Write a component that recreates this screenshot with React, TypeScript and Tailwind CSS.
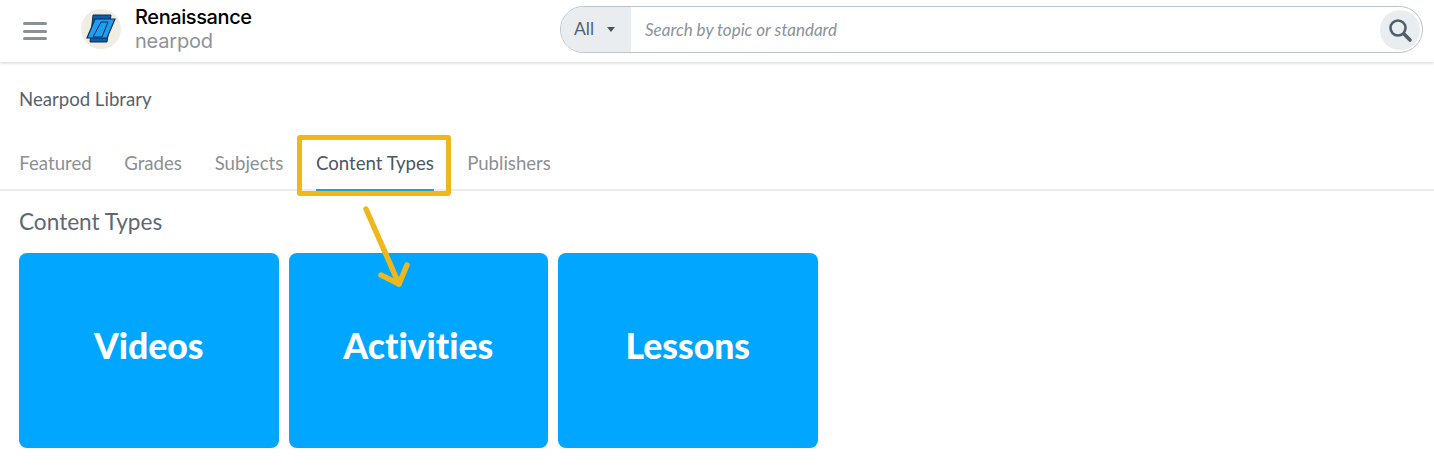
const font = "font-['Lato','Noto_Sans',sans-serif]"

const tabs = [
  { label: "Featured", width: "w-[73px]" },
  { label: "Grades", width: "w-[58px]" },
  { label: "Subjects", width: "w-[70px]" },
  { label: "Content Types", width: "w-[118px]", active: true },
  { label: "Publishers", width: "w-[86px]" },
]

const cards = ["Videos", "Activities", "Lessons"]

const Logo = () => (
  <div className="flex h-10 w-10 items-center justify-center rounded-full bg-[#f0eee4]">
    <svg width="40" height="40" viewBox="0 0 40 40" fill="none">
      <path d="M12 6H30L26 33H9Z" fill="#0a5fa8" stroke="#0b2f52" strokeWidth="1" />
      <path d="M14 10H34L26 29H6Z" fill="#1f9df0" stroke="#0b2f52" strokeWidth="1.2" />
      <path d="M20 13H27L21 28H12Z" stroke="#0b2f52" strokeWidth="1" />
    </svg>
  </div>
)

const App = () => {
  return (
    <div className={`relative h-[468px] w-[1434px] overflow-hidden bg-white ${font}`}>
      <header className="flex h-[62px] items-center shadow-[0_1px_3px_rgba(0,0,0,0.18)]">
        <div className="ml-[23px] flex w-6 flex-col gap-[4.5px]">
          <span className="h-[3px] rounded-sm bg-[#8a9095]" />
          <span className="h-[3px] rounded-sm bg-[#8a9095]" />
          <span className="h-[3px] rounded-sm bg-[#8a9095]" />
        </div>
        <div className="mb-1 ml-[34px] flex w-[172px] items-center gap-[14px]">
          <Logo />
          <div className="flex flex-col">
            <span className="font-['Inter',sans-serif] text-[20px] leading-[24px] font-medium tracking-[-0.4px] text-black">
              Renaissance
            </span>
            <span className="font-['Inter',sans-serif] text-[20px] leading-[24px] tracking-[-0.2px] text-[#8e9296]">
              nearpod
            </span>
          </div>
        </div>
        <div className="mb-[3px] ml-[307px] flex h-[47px] w-[863px] items-center overflow-hidden rounded-full border border-[#bcc2c6]">
          <div className="flex h-full w-[70px] items-center bg-[#e9edf0] pl-[13px] text-[#556270]">
            <span className="text-[17.5px]">All</span>
            <svg className="ml-[13px]" width="8" height="5" viewBox="0 0 8 5">
              <path d="M0 0H8L4 5Z" fill="#4a5560" />
            </svg>
          </div>
          <span className="ml-[14px] flex-1 text-[17px] text-[#8b9299] italic">
            Search by topic or standard
          </span>
          <div className="mr-[2px] flex h-10 w-10 items-center justify-center rounded-full bg-[#e9edf0]">
            <svg width="26" height="26" viewBox="0 0 26 26" fill="none" stroke="#4e5f6c">
              <circle cx="11" cy="11" r="7.5" strokeWidth="2.6" />
              <path d="M17 17L23 23" strokeWidth="3.6" strokeLinecap="round" />
            </svg>
          </div>
        </div>
      </header>

      <div className="px-[19px] pt-[26px] text-[18.6px] leading-[22px] text-[#55626e]">Nearpod Library</div>

      <nav className="mt-[28px] flex h-[53px] gap-8 border-b-2 border-[#e9ebec] px-[19px]">
        {tabs.map((tab) => (
          <div
            key={tab.label}
            className={`flex h-[53px] shrink-0 items-start justify-center whitespace-nowrap pt-3 text-[18.6px] leading-[26px] ${tab.width} ${
              tab.active ? "border-b-2 border-[#2a9fc9] text-[#4a5764]" : "text-[#8b9094]"
            }`}
          >
            {tab.label}
          </div>
        ))}
      </nav>

      <h2 className="mt-[17px] px-[19px] text-[22.6px] leading-[28px] text-[#5d6874]">Content Types</h2>

      <div className="mt-[17px] flex gap-[10px] px-[19px]">
        {cards.map((card) => (
          <div
            key={card}
            className="flex h-[195px] w-[259.5px] items-center justify-center rounded-lg bg-[#00a6ff] pb-[10px] text-[35.5px] font-black text-white [font-variant-ligatures:none]"
          >
            {card}
          </div>
        ))}
      </div>

      <div className="pointer-events-none absolute top-[135px] left-[297px] h-[61px] w-[154px] rounded-[3px] border-[5px] border-[#eeb71c]" />
      <svg className="pointer-events-none absolute top-[200px] left-[355px]" width="65" height="95" viewBox="0 0 65 95" fill="none">
        <path d="M11 9L44 84" stroke="#eeb71c" strokeWidth="5.5" strokeLinecap="round" />
        <path d="M26 75L44 84L52 65" stroke="#eeb71c" strokeWidth="5.5" strokeLinecap="round" strokeLinejoin="round" />
      </svg>
    </div>
  )
}

export default App
